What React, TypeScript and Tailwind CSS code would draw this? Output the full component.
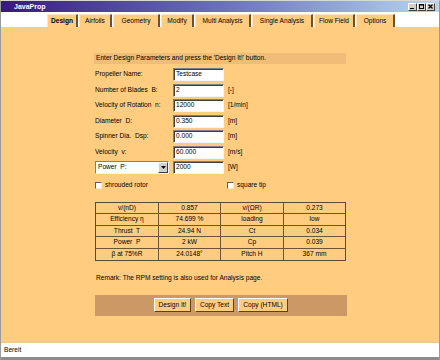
import React from "react";

const tabs = [
  { label: "Design", w: "w-[31px]", active: true },
  { label: "Airfoils", w: "w-[33px]" },
  { label: "Geometry", w: "w-[47px]" },
  { label: "Modify", w: "w-[33px]" },
  { label: "Multi Analysis", w: "w-[56px]" },
  { label: "Single Analysis", w: "w-[61px]" },
  { label: "Flow Field", w: "w-[41px]" },
  { label: "Options", w: "w-[39px]" },
];

const fields = [
  { label: "Propeller Name:", value: "Testcase", unit: "" },
  { label: "Number of Blades  B:", value: "2", unit: "[-]" },
  { label: "Velocity of Rotation  n:", value: "12000", unit: "[1/min]" },
  { label: "Diameter  D:", value: "0.350", unit: "[m]" },
  { label: "Spinner Dia.  Dsp:", value: "0.000", unit: "[m]" },
  { label: "Velocity  v:", value: "60.000", unit: "[m/s]" },
];

const results = [
  ["v/(nD)", "0.857", "v/(ΩR)", "0.273"],
  ["Efficiency η", "74.699 %", "loading", "low"],
  ["Thrust  T", "24.94 N", "Ct", "0.034"],
  ["Power  P", "2 kW", "Cp", "0.039"],
  ["β at 75%R", "24.0148°", "Pitch H", "367 mm"],
];

function TextBox({ value }: { value: string }) {
  return (
    <div className="w-[51px] h-[13px] bg-white border border-t-[#808080] border-l-[#808080] border-b-[#f4f4f4] border-r-[#f4f4f4] shadow-[inset_1px_1px_0_#404040] flex items-center pl-[2px] whitespace-pre">
      {value}
    </div>
  );
}

function CheckBox({ label }: { label: string }) {
  return (
    <div className="flex items-center gap-[3px]">
      <div className="w-[7px] h-[7px] bg-white border border-t-[#606060] border-l-[#606060] border-b-[#e8e8e8] border-r-[#e8e8e8]" />
      <span>{label}</span>
    </div>
  );
}

function WinButton({ children }: { children: React.ReactNode }) {
  return (
    <div className="w-[9px] h-[8px] bg-[#d4d0c8] border border-t-white border-l-white border-b-[#404040] border-r-[#404040] flex items-center justify-center">
      {children}
    </div>
  );
}

export default function App() {
  return (
    <div className="w-[440px] h-[360px] flex flex-col bg-white border-x border-[#9a9a9a] border-t border-t-[#d8d8d8] font-['Liberation_Sans',Arial,sans-serif] text-[6.6px] leading-none text-black overflow-hidden">
      {/* title bar */}
      <div className="h-[11px] flex items-center justify-between bg-gradient-to-r from-[#38187c] via-[#6a70b8] to-[#b8d6f0] pl-[13px] pr-[4px]">
        <span className="text-white font-bold text-[7px]">JavaProp</span>
        <div className="flex gap-0">
          <WinButton>
            <svg width="5" height="5" viewBox="0 0 5 5">
              <rect x="0" y="4" width="4" height="1" fill="#000" />
            </svg>
          </WinButton>
          <WinButton>
            <svg width="5" height="5" viewBox="0 0 5 5">
              <rect x="0.5" y="0.5" width="4" height="4" fill="none" stroke="#000" />
              <rect x="0" y="0" width="5" height="1.5" fill="#000" />
            </svg>
          </WinButton>
          <WinButton>
            <svg width="5" height="5" viewBox="0 0 5 5">
              <path d="M0.5 0.5 L4.5 4.5 M4.5 0.5 L0.5 4.5" stroke="#000" strokeWidth="1.2" />
            </svg>
          </WinButton>
        </div>
      </div>

      {/* tabs */}
      <div className="h-[15px] flex items-end pl-[46px] gap-[1px] bg-white">
        {tabs.map((t) => (
          <div
            key={t.label}
            className={`${t.w} h-[13px] flex items-center justify-center bg-[#ffcc80] border-t border-l border-t-[#ffe6bf] border-l-[#ffe6bf] border-r-2 border-r-[#6e5230] ${t.active ? "font-bold" : ""}`}
          >
            {t.label}
          </div>
        ))}
      </div>

      {/* content */}
      <div className="flex-1 bg-[#ffcc80] border-b border-dotted border-[#e8c088] pt-[26px] pl-[93px]">
        <div className="w-[252px] h-[11px] bg-[#efbd78] flex items-center pl-[2px]">
          Enter Design Parameters and press the 'Design It!' button.
        </div>

        <div className="mt-[4px] flex flex-col gap-[2.5px] pl-[1px]">
          {fields.map((f) => (
            <div key={f.label} className="h-[13px] flex items-center">
              <span className="w-[78px] whitespace-pre">{f.label}</span>
              <TextBox value={f.value} />
              <span className="ml-[4px]">{f.unit}</span>
            </div>
          ))}
          <div className="h-[13px] flex items-center">
            <div className="w-[74px] h-[13px] bg-white border border-t-[#808080] border-l-[#808080] border-b-[#f4f4f4] border-r-[#f4f4f4] flex items-center justify-between">
              <span className="pl-[2px] whitespace-pre">Power  P:</span>
              <div className="w-[10px] h-[11px] bg-[#d4d0c8] border border-t-white border-l-white border-b-[#404040] border-r-[#404040] flex items-center justify-center">
                <svg width="5" height="3" viewBox="0 0 5 3">
                  <path d="M0 0 L5 0 L2.5 3 Z" fill="#000" />
                </svg>
              </div>
            </div>
            <div className="ml-[4px]">
              <TextBox value="2000" />
            </div>
            <span className="ml-[4px]">[W]</span>
          </div>
        </div>

        <div className="mt-[7px] h-[8px] flex items-center pl-[1px]">
          <div className="w-[132px]">
            <CheckBox label="shrouded rotor" />
          </div>
          <CheckBox label="square tip" />
        </div>

        <div className="mt-[13px] ml-[1px] w-[251px] grid grid-cols-[63px_62px_63px_1fr] border border-[#5e4a2c]">
          {results.map((row, i) =>
            row.map((cell, j) => (
              <div
                key={`${i}-${j}`}
                className={`h-[11.4px] flex items-center justify-center whitespace-pre ${j < 3 ? "border-r border-r-[#6b5535]" : ""} ${i < 4 ? "border-b border-b-[#6b5535]" : ""}`}
              >
                {cell}
              </div>
            ))
          )}
        </div>

        <div className="mt-[13px] pl-[2px] h-[8px] flex items-center">
          Remark: The RPM setting is also used for Analysis page.
        </div>

        <div className="mt-[13px] ml-[1px] w-[252px] h-[21px] bg-[#cc9966] flex items-center justify-center gap-[4px]">
          {[
            { label: "Design It!", w: "w-[37px]" },
            { label: "Copy Text", w: "w-[39px]" },
            { label: "Copy (HTML)", w: "w-[50px]" },
          ].map((b) => (
            <div
              key={b.label}
              className={`${b.w} h-[14px] bg-[#ffcc80] border border-t-white border-l-white border-b-[#5a4020] border-r-[#5a4020] flex items-center justify-center`}
            >
              {b.label}
            </div>
          ))}
        </div>
      </div>

      {/* status bar */}
      <div className="h-[14px] flex items-center pl-[3px] bg-white">Bereit</div>
      <div className="h-[3px] bg-[#8c8c8c]" />
    </div>
  );
}
